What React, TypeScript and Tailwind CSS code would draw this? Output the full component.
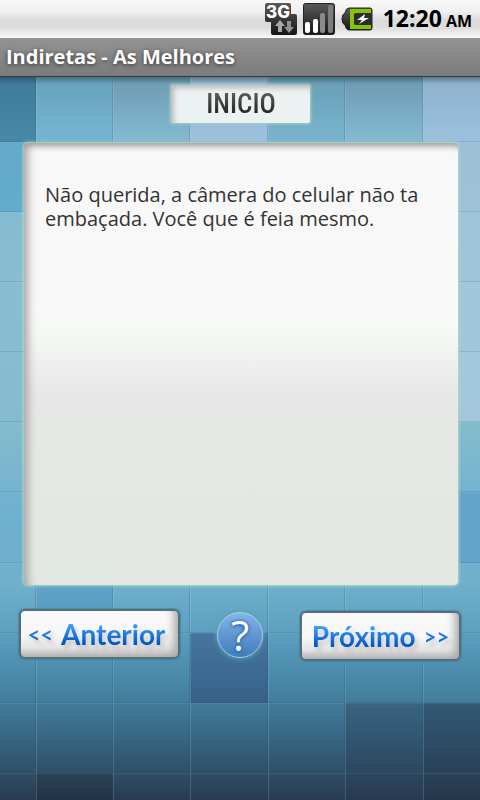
import type { ReactNode } from 'react'

interface Tile {
  x: number
  y: number
  w: number
  h?: number
  color: string
  opacity: number
}

const COLUMN_LINES = [36, 113, 190, 268, 345, 423]
const ROW_LINES = [142, 212, 282, 352, 422, 492, 563, 633, 703, 773]

// Tiles that are lighter or darker than the backdrop gradient
const TILES: Tile[] = [
  { x: 0, y: 77, w: 36, h: 65, color: '#0f5880', opacity: 0.5 },
  { x: 36, y: 77, w: 77, h: 65, color: '#5fb0d0', opacity: 0.35 },
  { x: 190, y: 77, w: 78, h: 65, color: '#b4c8ea', opacity: 0.5 },
  { x: 268, y: 77, w: 77, h: 65, color: '#5fa8c4', opacity: 0.3 },
  { x: 423, y: 77, w: 57, h: 65, color: '#b8cdea', opacity: 0.45 },
  { x: 0, y: 142, w: 36, color: '#3c98c8', opacity: 0.45 },
  { x: 423, y: 142, w: 57, color: '#b0c4dc', opacity: 0.6 },
  { x: 423, y: 212, w: 57, color: '#b0c8e0', opacity: 0.6 },
  { x: 423, y: 282, w: 57, color: '#b4cbe2', opacity: 0.6 },
  { x: 423, y: 352, w: 57, color: '#b8cde4', opacity: 0.6 },
  { x: 423, y: 492, w: 57, h: 71, color: '#4488c4', opacity: 0.3 },
  { x: 36, y: 563, w: 77, color: '#3c8cbc', opacity: 0.3 },
  { x: 190, y: 633, w: 78, color: '#283c70', opacity: 0.42 },
  { x: 345, y: 703, w: 135, h: 97, color: '#283850', opacity: 0.35 },
  { x: 423, y: 703, w: 57, h: 97, color: '#1c2c40', opacity: 0.2 },
  { x: 36, y: 773, w: 77, h: 27, color: '#141e2c', opacity: 0.25 },
]

function Backdrop() {
  return (
    <svg
      className="absolute inset-0 -z-10 h-full w-full"
      viewBox="0 77 480 723"
      preserveAspectRatio="none"
      aria-hidden="true"
    >
      <defs>
        <linearGradient id="sky" x1="0" y1="0" x2="0" y2="1">
          <stop offset="0" stopColor="#6c9ab0" />
          <stop offset="0.08" stopColor="#82b7d0" />
          <stop offset="0.3" stopColor="#88bfd0" />
          <stop offset="0.48" stopColor="#84bccd" />
          <stop offset="0.6" stopColor="#70b0d0" />
          <stop offset="0.7" stopColor="#70b0cc" />
          <stop offset="0.77" stopColor="#5c9fbf" />
          <stop offset="0.82" stopColor="#4c8dae" />
          <stop offset="0.865" stopColor="#437c9b" />
          <stop offset="0.91" stopColor="#386885" />
          <stop offset="0.96" stopColor="#305068" />
          <stop offset="1" stopColor="#283a4e" />
        </linearGradient>
        <linearGradient id="edge" x1="0" y1="0" x2="0" y2="1">
          <stop offset="0" stopColor="#203440" stopOpacity="0.45" />
          <stop offset="1" stopColor="#203440" stopOpacity="0" />
        </linearGradient>
      </defs>
      <rect y="77" width="480" height="723" fill="url(#sky)" />
      {TILES.map(({ x, y, w, h = 70, color, opacity }) => (
        <rect
          key={`${x}-${y}`}
          x={x}
          y={y}
          width={w}
          height={h}
          fill={color}
          fillOpacity={opacity}
        />
      ))}
      {COLUMN_LINES.map((x) => (
        <g key={x}>
          <rect x={x - 1} y="77" width="1" height="723" fill="#1f4c68" fillOpacity="0.2" />
          <rect x={x} y="77" width="1" height="723" fill="#a8dcf0" fillOpacity="0.2" />
        </g>
      ))}
      {ROW_LINES.map((y) => (
        <g key={y}>
          <rect y={y - 1} width="480" height="1" fill="#1f4c68" fillOpacity="0.15" />
          <rect y={y} width="480" height="1" fill="#a8dcf0" fillOpacity="0.1" />
        </g>
      ))}
      <rect y="77" width="480" height="7" fill="url(#edge)" />
    </svg>
  )
}

function NetworkIcon() {
  return (
    <svg className="h-8 w-8" viewBox="0 0 32 32" role="img" aria-label="3G">
      <defs>
        <linearGradient id="plate" x1="0" y1="0" x2="0" y2="1">
          <stop offset="0" stopColor="#5a5a5a" />
          <stop offset="1" stopColor="#161616" />
        </linearGradient>
      </defs>
      <path
        d="M2 0h22q2 0 2 2v9h4q2 0 2 2v17q0 2-2 2H8q-2 0-2-2V19H2q-2 0-2-2V2q0-2 2-2z"
        fill="url(#plate)"
      />
      <text
        x="1"
        y="15"
        fill="#fff"
        fontFamily="Inter, 'Liberation Sans', sans-serif"
        fontSize="17"
        fontWeight="800"
      >
        3G
      </text>
      <path d="M15 17l5 6h-3v6h-4v-6h-3z" fill="#a8a8a8" />
      <path d="M24 30l-5-6h3v-6h4v6h3z" fill="#909090" />
    </svg>
  )
}

function SignalIcon() {
  return (
    <svg className="h-8 w-8" viewBox="0 0 32 32" role="img" aria-label="Sinal">
      <rect x="0.5" y="0.5" width="31" height="31" rx="2" fill="url(#plate)" stroke="#222" />
      <rect x="2" y="19" width="5" height="11" rx="2" fill="#fff" />
      <rect x="10" y="16" width="5" height="14" rx="2" fill="#fff" />
      <rect x="17" y="10" width="5" height="20" rx="2" fill="#8a8a8a" />
      <rect x="25" y="2" width="5" height="28" rx="2" fill="#7c7c7c" />
    </svg>
  )
}

function BatteryIcon() {
  return (
    <svg className="h-6 w-8" viewBox="0 0 32 24" role="img" aria-label="Bateria">
      <path
        d="M8 1h21q2 0 2 2v18q0 2-2 2H8q-3 0-4-5-3-1-3-6t3-6q1-5 4-5z"
        fill="url(#plate)"
        stroke="#222"
      />
      <path d="M9 2h21v4H17q-4 0-4 3v6q0 3 4 3h13v4H9z" fill="#86c400" />
      <rect x="13" y="6" width="17" height="12" rx="2" fill="#2c2c2c" />
      <path d="M24 7l-8 6h5l-3 4 10-6h-5z" fill="#fff" />
    </svg>
  )
}

function StatusBar() {
  return (
    <div className="flex h-[38px] items-center justify-end bg-[linear-gradient(#f8f8f8,#f0f0f0_30%,#dadada_55%,#dcdcdc_72%,#f8f8f8)] pr-2 text-black">
      <div className="flex items-center gap-1.5">
        <NetworkIcon />
        <SignalIcon />
        <BatteryIcon />
      </div>
      <time className="ml-2.5 flex items-baseline gap-1 pt-0.5 font-['Open_Sans','Noto_Sans',sans-serif] font-bold leading-none">
        <span className="text-[23px]">12:20</span>
        <span className="text-base">AM</span>
      </time>
    </div>
  )
}

function NavButton({ className, children }: { className: string; children: ReactNode }) {
  return (
    <button
      type="button"
      className={`flex h-[50px] w-[161px] items-center justify-center rounded-md border-2 border-[#4d717f] bg-[linear-gradient(#fafafa,#f6f6f6_55%,#e4e4e4_80%,#b0b0b0)] font-['Lato',sans-serif] font-bold shadow-[0_0_1px_1px_#4d717f80,inset_-12px_0_8px_-8px_#a8a8a8] ${className}`}
    >
      <span className="flex items-center gap-2 bg-gradient-to-b from-[#3c9cff] from-25% to-[#0058c4] to-75% bg-clip-text text-transparent drop-shadow-[3px_4px_2px_rgba(0,0,0,0.15)]">
        {children}
      </span>
    </button>
  )
}

export default function App() {
  return (
    <div className="flex min-h-screen flex-col font-['Open_Sans','Noto_Sans',sans-serif]">
      <StatusBar />
      <header className="flex h-[39px] items-center border-b border-[#2c3c40] bg-gradient-to-b from-[#939393] to-[#7b7b7b] px-1.5">
        <h1 className="text-xl font-bold leading-none text-white [text-shadow:0_1px_4px_#333333]">
          Indiretas - As Melhores
        </h1>
      </header>

      <main className="relative isolate flex flex-1 flex-col px-[19px] pt-2">
        <Backdrop />

        <button
          type="button"
          className="flex h-[38px] w-[139px] items-center justify-center self-center rounded-xs bg-[#ecf1f1] pl-0.5 font-['Roboto_Condensed','Roboto',sans-serif] text-[27px] font-medium leading-none shadow-[0_0_3px_1px_#a8d4c4,inset_7px_0_5px_-4px_#b8bcbc,inset_0_7px_5px_-4px_#b8bcbc]"
        >
          <span className="bg-gradient-to-b from-[#606060] to-[#1c1c1c] bg-clip-text text-transparent">
            INICIO
          </span>
        </button>

        <article className="ml-[5px] mr-[3px] mt-5 h-[442px] rounded-sm bg-[linear-gradient(#f8f8f8_35%,#f6f9f6_42%,#e7e7e7_57%,#e5e8e4_66%,#e3e8e2)] px-[21px] pt-10 shadow-[0_0_3px_1px_#b0dcc0,inset_12px_0_8px_-8px_#a8a4a4,inset_0_10px_6px_-7px_#989898]">
          <p className="text-xl leading-6 text-[#333333]">
            Não querida, a câmera do celular não ta embaçada. Você que é feia mesmo.
          </p>
        </article>

        <nav className="mt-6 flex h-[52px] items-center justify-between">
          <NavButton className="self-start pr-1.5">
            <span className="text-[22px]">&lt;&lt;</span>
            <span className="text-[28px] leading-9">Anterior</span>
          </NavButton>
          <button
            type="button"
            aria-label="Ajuda"
            className="flex size-[46px] items-center justify-center rounded-full border border-[#a4d4ec] bg-gradient-to-b from-[#84b4e8] to-[#3f7cbc] text-[42px] font-medium leading-none text-white shadow-[0_0_5px_1px_#58a0b4] [text-shadow:0_0_3px_#2860a8,0_1px_4px_#2860a8]"
          >
            ?
          </button>
          <NavButton className="self-end">
            <span className="text-[28px] leading-9">Próximo</span>
            <span className="text-[22px]">&gt;&gt;</span>
          </NavButton>
        </nav>
      </main>
    </div>
  )
}
